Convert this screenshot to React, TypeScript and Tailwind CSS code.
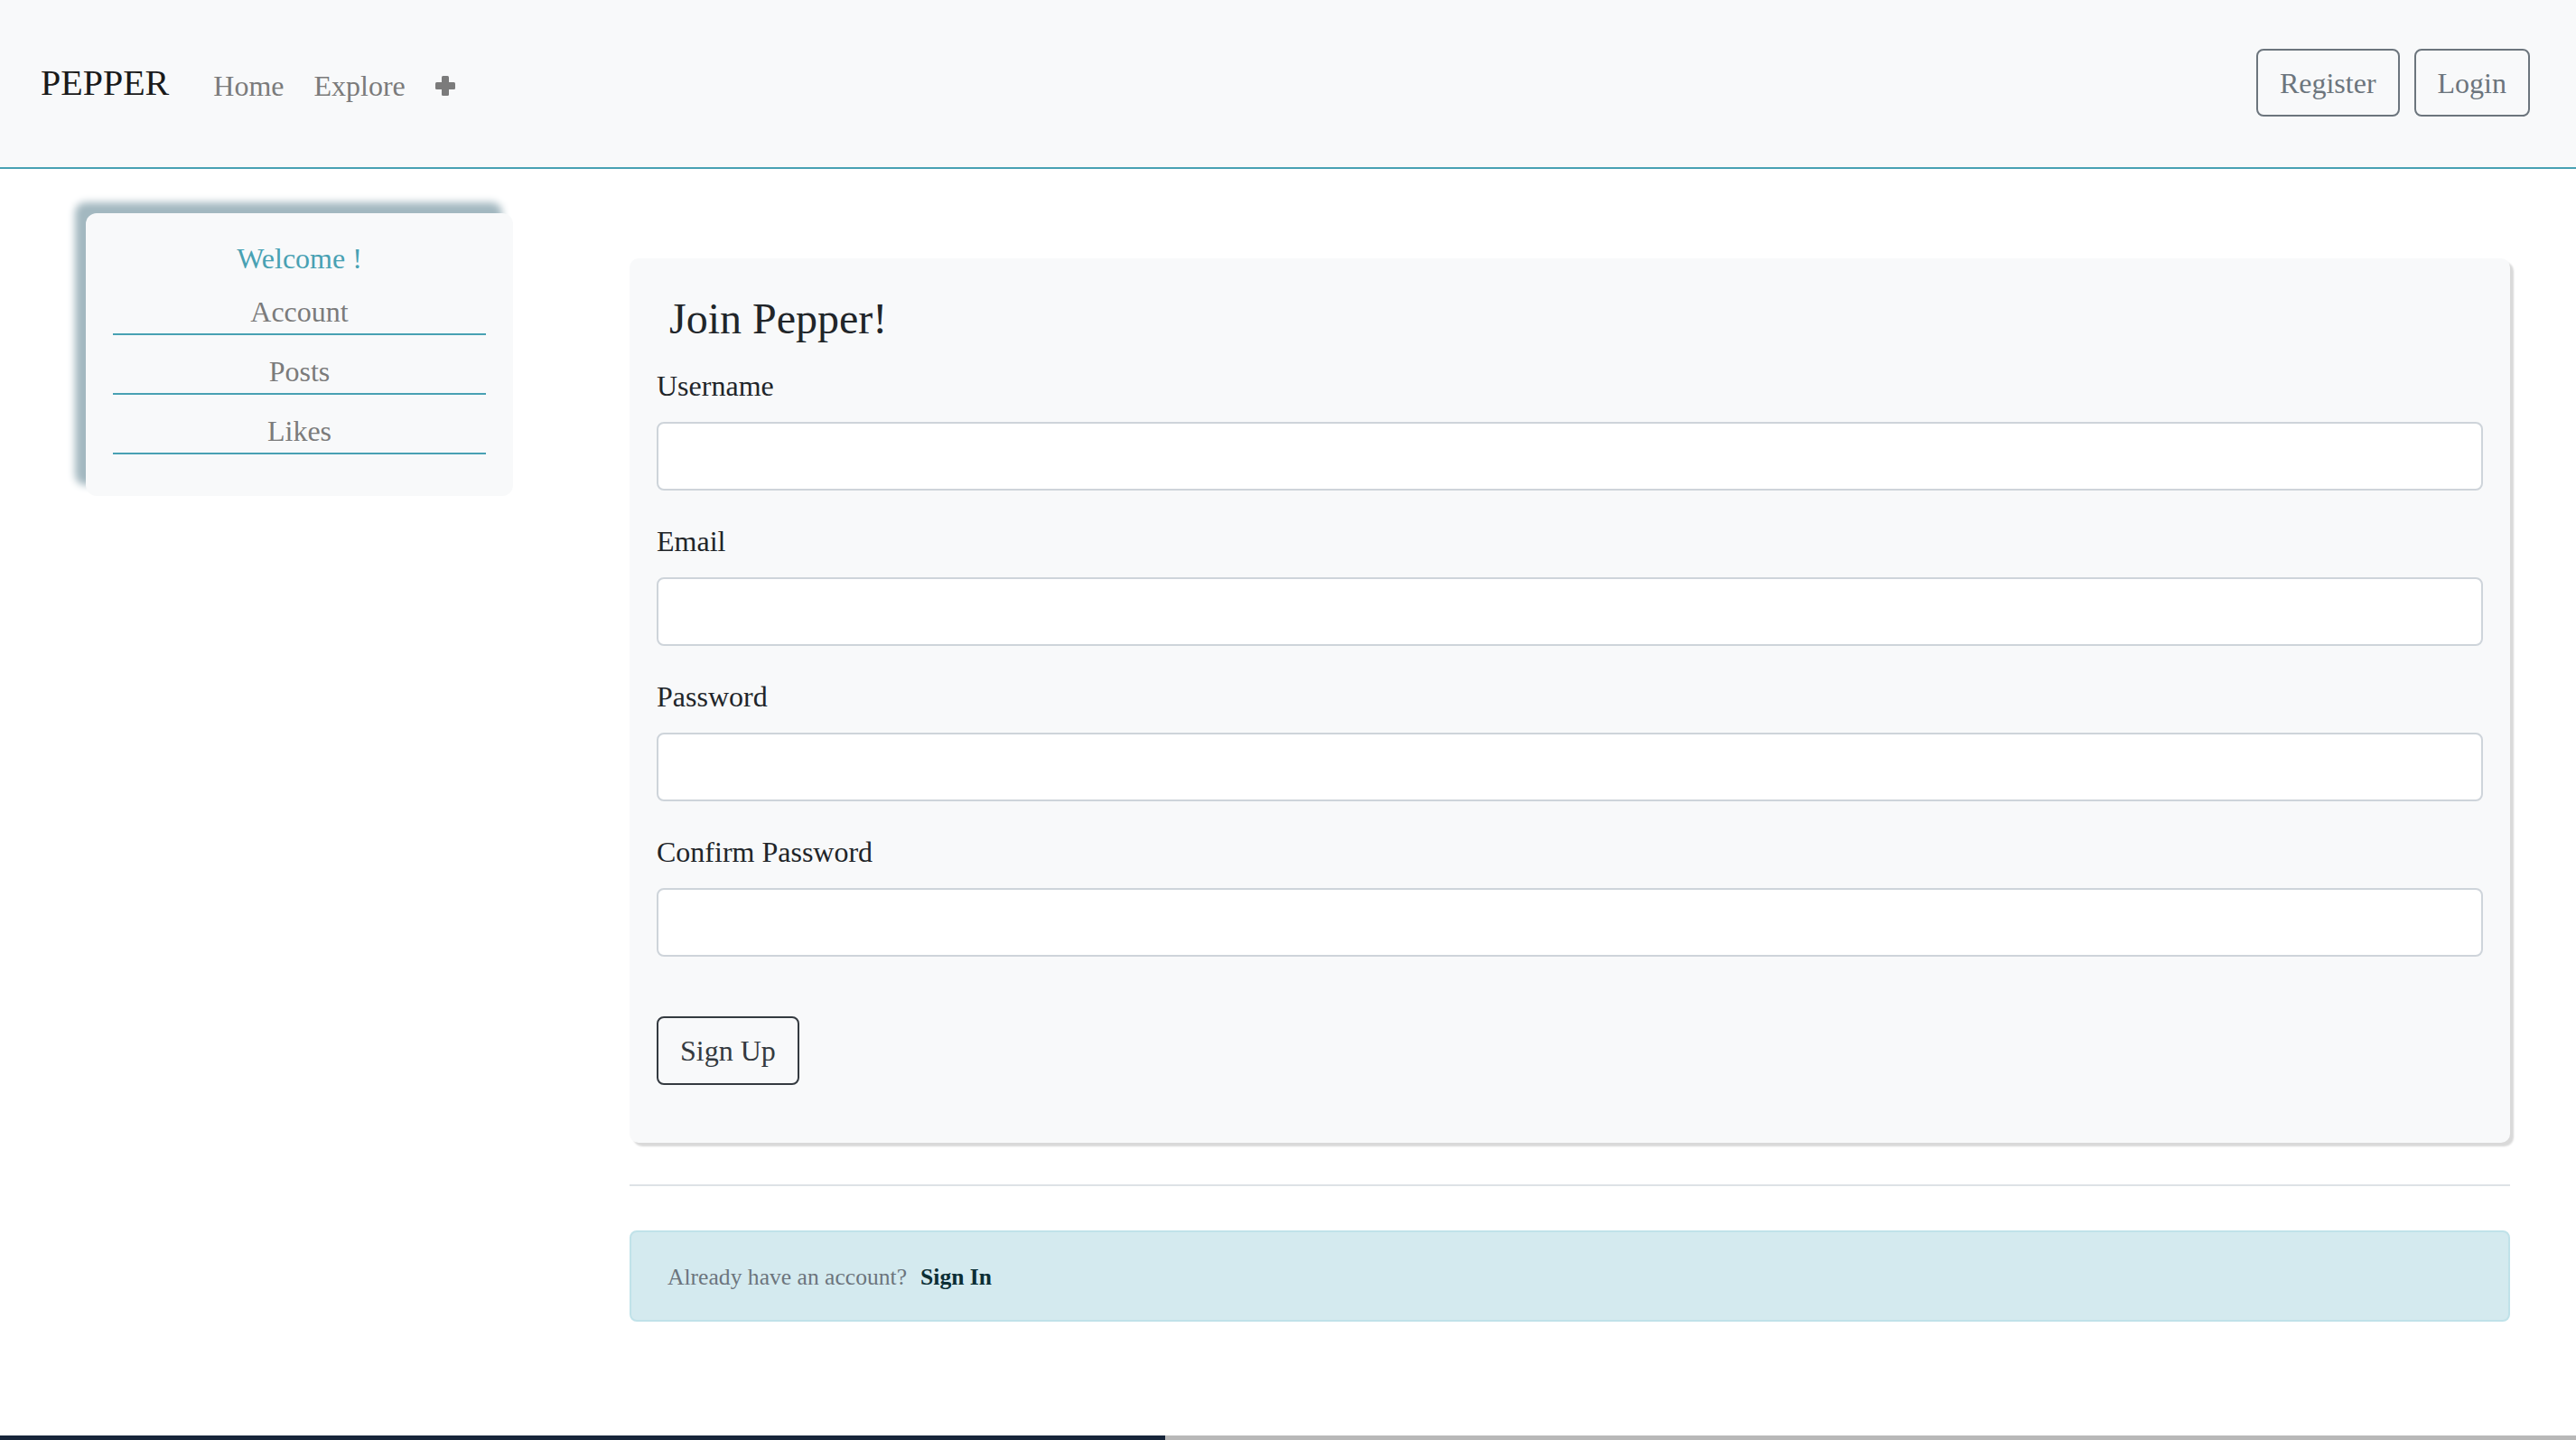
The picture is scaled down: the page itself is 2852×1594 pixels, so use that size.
import React from "react";

function Field({ label }: { label: string }) {
  return (
    <div className="mb-[32px]">
      <label className="block text-[32px] leading-[48px] mb-[16px] text-[#212529]">{label}</label>
      <input
        type="text"
        className="block w-full h-[76px] bg-white border-2 border-[#ced4da] rounded-[8px] outline-none"
      />
    </div>
  );
}

function PlusIcon() {
  return (
    <svg width="22" height="22" viewBox="0 0 22 22" fill="#7b7b7b">
      <rect x="7" y="0" width="8" height="22" rx="1.5" />
      <rect x="0" y="7" width="22" height="8" rx="1.5" />
    </svg>
  );
}

export default function App() {
  return (
    <div className="min-h-screen flex flex-col bg-white font-['Liberation_Serif',serif]">
      <nav className="h-[187px] bg-[#f8f9fa] border-b-2 border-[#48a1b3] flex items-center pl-[45px] pr-[51px]">
        <span className="text-[40px] leading-[60px] text-[#1a1a1a] -mt-[2px]">PEPPER</span>
        <a className="ml-[49px] text-[32px] leading-[48px] text-[#7b7b7b] mt-[4px]">Home</a>
        <a className="ml-[33px] text-[32px] leading-[48px] text-[#7b7b7b] mt-[4px]">Explore</a>
        <span className="ml-[33px] mt-[4px] flex items-center">
          <PlusIcon />
        </span>
        <div className="ml-auto flex items-center gap-[16px] -mt-[2px]">
          <button className="h-[75px] px-[24px] border-2 border-[#6c757d] rounded-[8px] text-[32px] leading-[48px] text-[#6c757d]">
            Register
          </button>
          <button className="h-[75px] px-[24px] border-2 border-[#6c757d] rounded-[8px] text-[32px] leading-[48px] text-[#6c757d]">
            Login
          </button>
        </div>
      </nav>

      <div className="flex items-start">
        <aside className="ml-[95px] mt-[49px] w-[473px] bg-[#f8f9fa] rounded-[12px] pt-[26px] px-[30px] pb-[46px] shadow-[-12px_-12px_9px_#a3b8c0]">
          <div className="text-center text-[32px] leading-[48px] text-[#48a1b3]">Welcome !</div>
          <div className="mt-[11px] text-center text-[32px] leading-[48px] text-[#7b7b7b] border-b-2 border-[#48a1b3]">Account</div>
          <div className="mt-[16px] text-center text-[32px] leading-[48px] text-[#7b7b7b] border-b-2 border-[#48a1b3]">Posts</div>
          <div className="mt-[16px] text-center text-[32px] leading-[48px] text-[#7b7b7b] border-b-2 border-[#48a1b3]">Likes</div>
        </aside>

        <main className="ml-[129px] mt-[99px] w-[2082px]">
          <div className="bg-[#f8f9fa] rounded-[10px] p-[30px] shadow-[4px_4px_2px_#d9d9d9]">
            <h4 className="ml-[14px] mt-[8px] mb-[21px] text-[48px] leading-[58px] text-[#212529]">Join Pepper!</h4>
            <Field label="Username" />
            <Field label="Email" />
            <Field label="Password" />
            <Field label="Confirm Password" />
            <button className="mt-[34px] mb-[34px] h-[76px] px-[24px] border-2 border-[#343a40] rounded-[8px] text-[32px] leading-[48px] text-[#343a40]">
              Sign Up
            </button>
          </div>
          <div className="mt-[46px] border-t-2 border-[#dee2e6]" />
          <div className="mt-[49px] bg-[#d4eaef] border-2 border-[#c0e2e9] rounded-[8px] px-[40px] py-[23px] text-[32px] leading-[48px]">
            <span className="text-[25.6px] text-[#6c757d]">Already have an account?</span>
            <span className="ml-[15px] text-[25.6px] font-bold text-[#0b2e35]">Sign In</span>
          </div>
        </main>
      </div>

      <div className="mt-auto h-[5px] flex">
        <div className="w-[1290px] bg-[#17253a]" />
        <div className="flex-1 bg-[#b8b8b8]" />
      </div>
    </div>
  );
}
